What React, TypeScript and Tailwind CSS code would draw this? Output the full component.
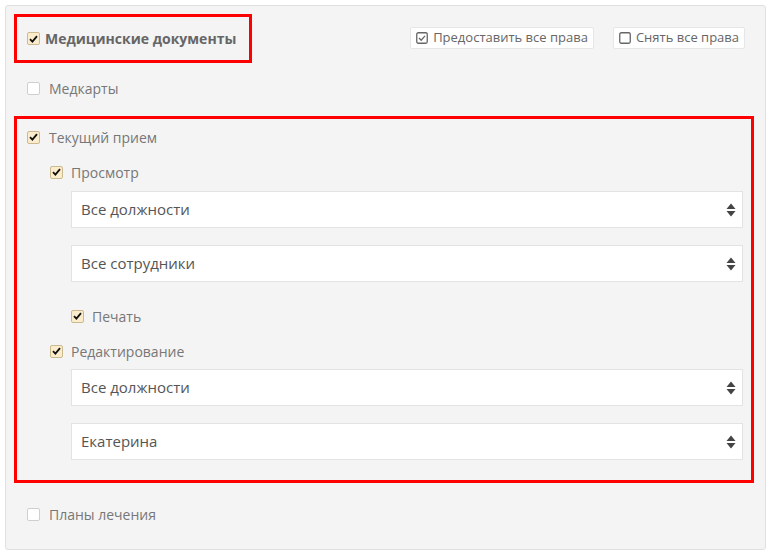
import React from "react";

// ── Small building blocks ───────────────────────────────────────────────────
function Check({ checked }: { checked: boolean }) {
  return checked ? (
    <span className="w-[13px] h-[13px] shrink-0 rounded-[2px] border border-[#cbb98f] bg-[#fbeccb] flex items-center justify-center">
      <svg width="9" height="8" viewBox="0 0 9 8">
        <path d="M1 4.2 L3.4 6.6 L8 1.2" fill="none" stroke="#111" strokeWidth="1.8" />
      </svg>
    </span>
  ) : (
    <span className="w-[13px] h-[13px] shrink-0 rounded-[2px] border border-[#cfcfcf] bg-white" />
  );
}

function Row({
  checked,
  label,
  gap = "gap-[9px]",
  className = "",
  bold = false,
}: {
  checked: boolean;
  label: string;
  gap?: string;
  className?: string;
  bold?: boolean;
}) {
  return (
    <div className={`h-[22px] flex items-center ${gap} ${className}`}>
      <Check checked={checked} />
      <span className={bold ? "text-[14px] font-bold text-[#666]" : "text-[14px] text-[#777]"}>{label}</span>
    </div>
  );
}

function SortIcon() {
  return (
    <svg width="10" height="14" viewBox="0 0 10 14">
      <path d="M5 0.5 L9.5 6 L0.5 6 Z" fill="#444" />
      <path d="M0.5 8 L9.5 8 L5 13.5 Z" fill="#444" />
    </svg>
  );
}

function Select({ value, className = "" }: { value: string; className?: string }) {
  return (
    <div
      className={`h-[37px] ml-[44px] bg-white border border-[#e3e3e3] flex items-center justify-between pl-[9px] pr-[6px] ${className}`}
    >
      <span className="text-[15px] text-[#555]">{value}</span>
      <SortIcon />
    </div>
  );
}

function ToolButton({ label, checked }: { label: string; checked: boolean }) {
  return (
    <div className="h-[22px] px-[5px] bg-white border border-[#e6e6e6] rounded-[2px] flex items-center gap-[5px] text-[13px] text-[#666]">
      <svg width="12" height="12" viewBox="0 0 12 12">
        <rect x="0.75" y="0.75" width="10.5" height="10.5" rx="1.5" fill="none" stroke="#666" strokeWidth="1.3" />
        {checked && <path d="M3 6 L5.2 8.2 L9 3.8" fill="none" stroke="#666" strokeWidth="1.3" />}
      </svg>
      <span>{label}</span>
    </div>
  );
}

export default function App() {
  return (
    <div className="w-[772px] h-[555px] bg-white p-[5px]" style={{ fontFamily: '"Open Sans", "Noto Sans", sans-serif' }}>
      <div className="w-[761px] h-[545px] bg-[#f4f4f4] border border-[#e0e0e0] rounded-[3px] px-[8px] pt-[8px]">
        {/* Header: group title + bulk actions */}
        <div className="flex items-start justify-between">
          <div className="w-[238px] h-[49px] border-[3px] border-[#ff0000] pl-[10px] flex items-center">
            <Row checked label="Медицинские документы" gap="gap-[5px]" bold />
          </div>
          <div className="flex items-center gap-[19px] mt-[13px] mr-[12px]">
            <ToolButton checked label="Предоставить все права" />
            <ToolButton checked={false} label="Снять все права" />
          </div>
        </div>

        <Row checked={false} label="Медкарты" className="ml-[13px] mt-[14px]" />

        {/* Current appointment permissions */}
        <div className="mt-[17px] w-[740px] h-[367px] border-[3px] border-[#ff0000] pl-[10px] pr-[8px] pt-[7px]">
          <Row checked label="Текущий прием" />
          <div className="ml-[23px]">
            <Row checked label="Просмотр" gap="gap-[8px]" className="mt-[13px]" />
          </div>
          <Select value="Все должности" className="mt-[8px]" />
          <Select value="Все сотрудники" className="mt-[17px]" />
          <div className="ml-[44px]">
            <Row checked label="Печать" gap="gap-[8px]" className="mt-[23px]" />
          </div>
          <div className="ml-[23px]">
            <Row checked label="Редактирование" gap="gap-[8px]" className="mt-[13px]" />
          </div>
          <Select value="Все должности" className="mt-[7px]" />
          <Select value="Екатерина" className="mt-[17px]" />
        </div>

        <Row checked={false} label="Планы лечения" className="ml-[13px] mt-[20px]" />
      </div>
    </div>
  );
}
